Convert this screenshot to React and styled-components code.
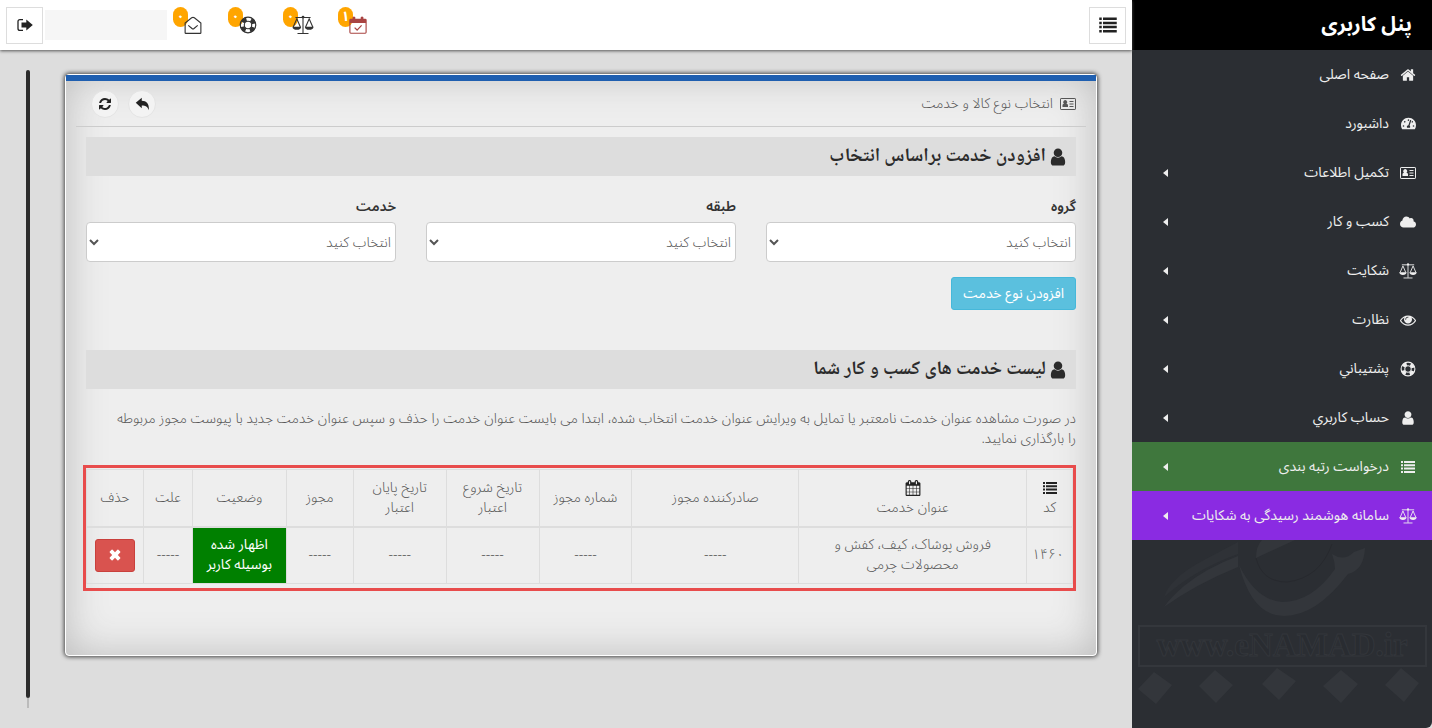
import styled, { createGlobalStyle } from "styled-components"
import { FaCloud, FaTachometerAlt } from "react-icons/fa"

const menu = [
  { label: "صفحه اصلی", icon: "home" },
  { label: "داشبورد", icon: "dashboard" },
  { label: "تکمیل اطلاعات", icon: "card", sub: true },
  { label: "کسب و کار", icon: "cloud", sub: true },
  { label: "شکایت", icon: "scale", sub: true },
  { label: "نظارت", icon: "eye", sub: true },
  { label: "پشتيباني", icon: "ring", sub: true },
  { label: "حساب کاربري", icon: "user", sub: true },
  { label: "درخواست رتبه بندی", icon: "list", sub: true, color: "#3f773d" },
  { label: "سامانه هوشمند رسیدگی به شکایات", icon: "scale", sub: true, color: "#8a2be2" },
]

const notices = [
  { icon: "calendarCheck", count: "۱", label: "تقویم", color: "#a94442" },
  { icon: "scale", count: "۰", label: "شکایت" },
  { icon: "ring", count: "۰", label: "پشتیبانی" },
  { icon: "envelope", count: "۰", label: "پیام" },
]

const fields = [
  { id: "group", label: "گروه" },
  { id: "category", label: "طبقه" },
  { id: "service", label: "خدمت" },
]

const columns = [
  { label: "کد", icon: "list", width: 46 },
  { label: "عنوان خدمت", icon: "calendar", width: 228 },
  { label: "صادرکننده مجوز", width: 167 },
  { label: "شماره مجوز", width: 93 },
  { label: "تاریخ شروع اعتبار", width: 93 },
  { label: "تاریخ پایان اعتبار", width: 93 },
  { label: "مجوز", width: 67 },
  { label: "وضعیت", width: 94 },
  { label: "علت", width: 49 },
  { label: "حذف", width: 57 },
]

const paths = {
  home: "M1472 992v480q0 26-19 45t-45 19h-384v-384h-256v384h-384q-26 0-45-19t-19-45v-480q0-1 .5-3t.5-3l575-474 575 474q1 2 1 6zm223-69l-62 74q-8 9-21 11h-3q-13 0-21-7l-692-577-692 577q-12 8-24 7-13-2-21-11l-62-74q-8-10-7-23.5t11-21.5l719-599q32-26 76-26t76 26l244 204v-195q0-14 9-23t23-9h192q14 0 23 9t9 23v408l219 182q10 8 11 21.5t-7 23.5z",
  user: "M1536 1399q0 109-62.5 187t-150.5 78h-854q-88 0-150.5-78t-62.5-187q0-85 8.5-160.5t31.5-152 58.5-131 94-89 134.5-34.5q131 128 313 128t313-128q76 0 134.5 34.5t94 89 58.5 131 31.5 152 8.5 160.5zm-256-887q0 159-112.5 271.5t-271.5 112.5-271.5-112.5-112.5-271.5 112.5-271.5 271.5-112.5 271.5 112.5 112.5 271.5z",
  eye: "M1664 960q-152-236-381-353 61 104 61 225 0 185-131.5 316.5t-316.5 131.5-316.5-131.5-131.5-316.5q0-121 61-225-229 117-381 353 133 205 333.5 326.5t434.5 121.5 434.5-121.5 333.5-326.5zm-720-384q0-20-14-34t-34-14q-125 0-214.5 89.5t-89.5 214.5q0 20 14 34t34 14 34-14 14-34q0-86 61-147t147-61q20 0 34-14t14-34zm848 384q0 34-20 69-140 230-376.5 368.5t-499.5 138.5-499.5-139-376.5-368q-20-35-20-69t20-69q140-229 376.5-368t499.5-139 499.5 139 376.5 368q20 35 20 69z",
  refresh: "M1639 1056q0 5-1 7-64 268-268 434.5t-478 166.5q-146 0-282.5-55t-243.5-157l-129 129q-19 19-45 19t-45-19-19-45v-448q0-26 19-45t45-19h448q26 0 45 19t19 45-19 45l-137 137q71 66 161 102t187 36q134 0 250-65t186-179q11-17 53-117 8-23 30-23h192q13 0 22.5 9.5t9.5 22.5zm25-800v448q0 26-19 45t-45 19h-448q-26 0-45-19t-19-45 19-45l138-138q-148-137-349-137-134 0-250 65t-186 179q-11 17-53 117-8 23-30 23h-199q-13 0-22.5-9.5t-9.5-22.5v-7q65-268 270-434.5t480-166.5q146 0 284 55.5t245 156.5l130-129q19-19 45-19t45 19 19 45z",
  calendar: "M192 1664h288v-288h-288v288zm352 0h320v-288h-320v288zm-352-352h288v-320h-288v320zm352 0h320v-320h-320v320zm-352-384h288v-288h-288v288zm736 736h320v-288h-320v288zm-384-736h320v-288h-320v288zm768 736h288v-288h-288v288zm-384-352h320v-320h-320v320zm-352-864v-288q0-13-9.5-22.5t-22.5-9.5h-64q-13 0-22.5 9.5t-9.5 22.5v288q0 13 9.5 22.5t22.5 9.5h64q13 0 22.5-9.5t9.5-22.5zm736 864h288v-320h-288v320zm-384-384h320v-288h-320v288zm384 0h288v-288h-288v288zm32-480v-288q0-13-9.5-22.5t-22.5-9.5h-64q-13 0-22.5 9.5t-9.5 22.5v288q0 13 9.5 22.5t22.5 9.5h64q13 0 22.5-9.5t9.5-22.5zm384-64v1280q0 52-38 90t-90 38h-1408q-52 0-90-38t-38-90v-1280q0-52 38-90t90-38h128v-96q0-66 47-113t113-47h64q66 0 113 47t47 113v96h384v-96q0-66 47-113t113-47h64q66 0 113 47t47 113v96h128q52 0 90 38t38 90z",
}

const Icon = ({ name, size = 16 }) => {
  if (name === "cloud") return <FaCloud size={size} aria-hidden="true" />
  if (name === "dashboard") return <FaTachometerAlt size={size - 1} aria-hidden="true" />
  if (paths[name]) {
    return (
      <svg width={size} height={size} viewBox="0 0 1792 1792" fill="currentColor" aria-hidden="true">
        <path d={paths[name]} />
      </svg>
    )
  }
  return (
    <svg width={size} height={size} viewBox="0 0 16 16" fill="none" stroke="currentColor" aria-hidden="true">
      {name === "list" && (
        <path
          d="M1 2h2v2H1zM4 2h11v2H4zM1 5.3h2v2H1zM4 5.3h11v2H4zM1 8.6h2v2H1zM4 8.6h11v2H4zM1 12h2v2H1zM4 12h11v2H4z"
          fill="currentColor"
          stroke="none"
        />
      )}
      {name === "card" && (
        <>
          <rect x=".5" y="2.5" width="15" height="11" rx=".6" />
          <path d="M9.5 5.5h4M9.5 8h4M9.5 10.5h4" />
          <path d="M2.5 11V9.2q0-1.4 1.4-1.5a2 2 0 1 1 2.6 0q1.5.1 1.5 1.5V11z" fill="currentColor" stroke="none" />
        </>
      )}
      {name === "scale" && (
        <>
          <path d="M2.5 2.5h11M8 2v12M4 14.2h8M.9 9.5l2.6-6 2.6 6M9.9 9.5l2.6-6 2.6 6" strokeWidth=".8" />
          <circle cx="8" cy="2.2" r="1" fill="currentColor" stroke="none" />
          <path d="M.3 9.2h6.4q-.3 2.3-3.2 2.3T.3 9.2zM9.3 9.2h6.4q-.3 2.3-3.2 2.3T9.3 9.2z" fill="currentColor" stroke="none" />
        </>
      )}
      {name === "ring" && (
        <>
          <circle cx="8" cy="8" r="6.9" strokeWidth="1.1" />
          <circle cx="8" cy="8" r="3.3" strokeWidth="1" />
          <circle cx="8" cy="8" r="5.2" strokeWidth="3.6" strokeDasharray="4.1 4.07" strokeDashoffset="-2.04" />
        </>
      )}
      {name === "envelope" && (
        <>
          <path d="M1 14.8V6.2L6.8 1.6q1.2-.8 2.4 0L15 6.2v8.6q0 .6-.6.6H1.6q-.6 0-.6-.6z" />
          <path d="M3.8 8.3l3.3 2.8q.9.7 1.8 0l3.3-2.8" />
        </>
      )}
      {name === "calendarCheck" && (
        <>
          <rect x=".8" y="3" width="14.4" height="12.3" rx=".8" />
          <path d="M.8 3h14.4v3.2H.8zM3.2 1.2q1.2-1.4 2.4 0v3H3.2zM10.4 1.2q1.2-1.4 2.4 0v3h-2.4z" fill="currentColor" stroke="none" />
          <path d="M5 10.3l2.2 2.2 4-4.2" strokeWidth="1.1" />
        </>
      )}
      {name === "reply" && (
        <path
          d="M.8 6L7.2.9v3.2c5 .1 8 3 7.6 9.9-1.5-3.9-3.6-5-7.6-5v3.1z"
          fill="currentColor"
          stroke="none"
        />
      )}
      {name === "logout" && (
        <>
          <path d="M6 2.6H3q-2 0-2 2v6.8q0 2 2 2h3" strokeWidth="1.3" />
          <path d="M4.5 5.5h4.8V2.4L15.8 8l-6.5 5.6v-3.1H4.5z" fill="currentColor" stroke="none" />
        </>
      )}
      {name === "remove" && (
        <path
          d="M2.8 4.6l1.8-1.8q.5-.4 1 0L8 5.2l2.4-2.4q.5-.4 1 0l1.8 1.8q.4.5 0 1L10.8 8l2.4 2.4q.4.5 0 1l-1.8 1.8q-.5.4-1 0L8 10.8l-2.4 2.4q-.5.4-1 0l-1.8-1.8q-.4-.5 0-1L5.2 8 2.8 5.6q-.4-.5 0-1z"
          fill="currentColor"
          stroke="none"
        />
      )}
    </svg>
  )
}

const Watermark = () => (
  <svg width="100%" viewBox="0 0 300 187" aria-hidden="true">
    <g fill="#33363b">
      <path d="M32 67Q38 58 52 46Q74 28 106 16l0 11Q64 44 32 67zM124 18L163 0H130Q124 6 124 18z" />
      <path d="M32 57Q38 38 72 20L106 2v12Q62 30 32 57z" fill="#2f3237" />
      <path d="M107 25Q120 76 152 76Q184 76 216 34Q232 30 233 8L222 12Q212 22 200 14Q203 22 203 29Q180 62 150 62Q124 60 107 25z" />
      <path d="M124 18Q130 42 155 42Q188 38 200 4" fill="none" stroke="#27292e" />
      <path d="M22 132l18 13-16 19-18-15zM83 130l18 15-17 18-17-17zM145 128l19 13-17 19-17-16zM209 130l17 14-17 19-18-17zM269 128l18 15-15 19-19-17z" />
    </g>
    <rect x="7" y="86" width="287" height="40" fill="none" stroke="#34373c" strokeWidth="2" />
    <text x="150" y="116" textAnchor="middle" direction="ltr" fill="#292c31" stroke="#33363b" strokeWidth="1">
      www.eNAMAD.ir
    </text>
  </svg>
)

const App = () => {
  return (
    <>
      <GlobalStyle />
      <Wrapper dir="rtl" lang="fa">
        <Sidebar>
          <Brand>پنل کاربری</Brand>
          <nav>
            {menu.map(item => (
              <MenuItem key={item.label} href="#" $color={item.color}>
                <MenuIcon><Icon name={item.icon} size={item.icon === "scale" ? 18 : 16} /></MenuIcon>
                <span>{item.label}</span>
                {item.sub && <Caret />}
              </MenuItem>
            ))}
          </nav>
          <Watermark />
        </Sidebar>
        <Main>
          <Topbar>
            <SquareButton aria-label="منو"><Icon name="list" size={20} /></SquareButton>
            <Notices>
              {notices.map(item => (
                <Notice key={item.icon} href="#" aria-label={item.label} $color={item.color}>
                  <Badge>{item.count}</Badge>
                  <Icon name={item.icon} size={item.icon === "scale" ? 22 : 18} />
                </Notice>
              ))}
            </Notices>
            <UserName />
            <SquareButton aria-label="خروج"><Icon name="logout" /></SquareButton>
          </Topbar>
          <Content>
            <Panel>
              <PanelHeader>
                <PanelTitle>
                  <Icon name="card" />
                  انتخاب نوع کالا و خدمت
                </PanelTitle>
                <Tools>
                  <RoundButton aria-label="بازگشت"><Icon name="reply" size={15} /></RoundButton>
                  <RoundButton aria-label="بارگذاری مجدد"><Icon name="refresh" size={14} /></RoundButton>
                </Tools>
              </PanelHeader>
              <PanelBody>
                <SectionTitle>
                  <Icon name="user" size={20} />
                  افزودن خدمت براساس انتخاب
                </SectionTitle>
                <Fields>
                  {fields.map(field => (
                    <Field key={field.id}>
                      <label htmlFor={field.id}>{field.label}</label>
                      <select id={field.id}>
                        <option>انتخاب کنید</option>
                      </select>
                    </Field>
                  ))}
                </Fields>
                <AddButton>افزودن نوع خدمت</AddButton>
                <SectionTitle>
                  <Icon name="user" size={20} />
                  لیست خدمت های کسب و کار شما
                </SectionTitle>
                <Note>
                  در صورت مشاهده عنوان خدمت نامعتبر یا تمایل به ویرایش عنوان خدمت انتخاب شده، ابتدا می بایست عنوان خدمت را حذف و سپس عنوان خدمت جدید با پیوست مجوز مربوطه را بارگذاری نمایید.
                </Note>
                <TableFrame>
                  <Table>
                    <colgroup>
                      {columns.map(col => <col key={col.label} style={{ width: `${col.width / 9.87}%` }} />)}
                    </colgroup>
                    <thead>
                      <tr>
                        {columns.map(col => (
                          <th key={col.label}>
                            {col.icon && <HeadIcon><Icon name={col.icon} /></HeadIcon>}
                            {col.label}
                          </th>
                        ))}
                      </tr>
                    </thead>
                    <tbody>
                      <tr>
                        <td>۱۴۶۰</td>
                        <td>فروش پوشاک، کیف، کفش و محصولات چرمی</td>
                        <td>-----</td>
                        <td>-----</td>
                        <td>-----</td>
                        <td>-----</td>
                        <td>-----</td>
                        <StatusCell>اظهار شده بوسیله کاربر</StatusCell>
                        <td>-----</td>
                        <td>
                          <DeleteButton aria-label="حذف"><Icon name="remove" /></DeleteButton>
                        </td>
                      </tr>
                    </tbody>
                  </Table>
                </TableFrame>
              </PanelBody>
            </Panel>
            <Rail />
          </Content>
        </Main>
      </Wrapper>
    </>
  )
}

export default App

const GlobalStyle = createGlobalStyle`
  *{
    box-sizing: border-box;
  }
  body{
    margin: 0;
    background: #ddd;
    color: #555;
    font: 14px/20px "Noto Sans Arabic", "DejaVu Sans Condensed", "DejaVu Sans", sans-serif;
  }
  button, select{
    font: inherit;
  }
  button{
    cursor: pointer;
  }
  svg{
    display: block;
    flex-shrink: 0;
  }
`
const Wrapper = styled.div`
  display: flex;
  min-height: 100vh;
`
const Sidebar = styled.aside`
  width: 300px;
  flex-shrink: 0;
  background: #2b2e33;
  color: #eee;
  border-bottom-right-radius: 6px;
  text{
    font: bold 33px "Liberation Serif", serif;
  }
`
const Brand = styled.div`
  height: 50px;
  padding: 0 20px;
  background: #000;
  color: #fff;
  font-size: 20px;
  font-weight: 700;
  line-height: 50px;
`
const MenuItem = styled.a`
  display: flex;
  align-items: center;
  height: 49px;
  padding: 0 15px;
  gap: 10px;
  color: #eee;
  text-decoration: none;
  white-space: nowrap;
  background: ${({ $color }) => $color || "transparent"};
`
const MenuIcon = styled.span`
  display: flex;
  justify-content: center;
  width: 18px;
`
const Caret = styled.i`
  margin-right: auto;
  margin-left: 16px;
  border: 4px solid transparent;
  border-left: 0;
  border-right: 5px solid #eee;
`
const Main = styled.main`
  flex: 1;
  min-width: 0;
  display: flex;
  flex-direction: column;
  font-weight: 300;
`
const Topbar = styled.header`
  display: flex;
  align-items: center;
  height: 50px;
  padding: 0 6px;
  background: #fff;
  box-shadow: 0 1px 3px #555;
`
const SquareButton = styled.button`
  display: grid;
  place-items: center;
  width: 37px;
  height: 37px;
  padding: 0;
  background: #fff;
  border: 1px solid #ddd;
  color: #222;
`
const Notices = styled.div`
  display: flex;
  gap: 28px;
  margin: 0 auto 0 12px;
`
const Notice = styled.a`
  position: relative;
  display: flex;
  align-items: center;
  justify-content: center;
  width: 27px;
  height: 36px;
  color: ${({ $color }) => $color || "#333"};
  svg{
    position: relative;
  }
`
const Badge = styled.span`
  position: absolute;
  top: 0;
  left: -6px;
  width: 15px;
  height: 20px;
  border-radius: 8px;
  background: #ffa500;
  color: #fff;
  font-size: 14px;
  font-weight: 700;
  text-align: center;
`
const UserName = styled.div`
  width: 122px;
  height: 30px;
  margin-left: 2px;
  background: #f6f6f6;
`
const Content = styled.div`
  flex: 1;
  display: flex;
  gap: 35px;
  padding: 20px 35px 20px 26px;
`
const Panel = styled.section`
  flex: 1;
  min-width: 0;
  align-self: flex-start;
  margin-top: 4px;
  padding-bottom: 64px;
  background: #eee;
  border: 1px solid #fff;
  border-radius: 4px;
  box-shadow: 0 0 4px 1px #444, inset 0 0 40px #bbb;
`
const PanelHeader = styled.div`
  display: flex;
  align-items: center;
  justify-content: space-between;
  height: 52px;
  padding: 0 20px;
  border-top: 6px solid #1f5fb0;
  position: relative;
  &::after{
    content: "";
    position: absolute;
    bottom: 0;
    left: 10px;
    right: 10px;
    border-bottom: 1px solid #ccc;
  }
`
const PanelTitle = styled.h1`
  display: flex;
  align-items: center;
  gap: 7px;
  margin: 0;
  font-size: 14px;
  font-weight: 300;
`
const Tools = styled.div`
  display: flex;
  gap: 9px;
  padding-left: 5px;
`
const RoundButton = styled.button`
  display: grid;
  place-items: center;
  width: 28px;
  height: 28px;
  padding: 0;
  background: #f3f3f3;
  border: 1px solid #e4e4e4;
  border-radius: 50%;
  color: #222;
`
const PanelBody = styled.div`
  padding: 10px 20px 0;
`
const SectionTitle = styled.h2`
  display: flex;
  align-items: center;
  gap: 2px;
  height: 39px;
  margin: 0;
  padding: 0 8px;
  background: #ddd;
  color: #2b2b2b;
  font-family: "Noto Naskh Arabic", "Noto Sans Arabic", "DejaVu Sans Condensed", sans-serif;
  font-size: 19px;
  font-weight: 900;
`
const Fields = styled.div`
  display: grid;
  grid-template-columns: repeat(3, 1fr);
  gap: 30px;
  margin-top: 21px;
`
const Field = styled.div`
  display: flex;
  flex-direction: column;
  gap: 5px;
  label{
    color: #333;
    font-weight: 600;
  }
  select{
    height: 40px;
    padding: 0;
    background: #fff;
    border: 1px solid #ccc;
    border-radius: 4px;
    color: #555;
  }
`
const AddButton = styled.button`
  display: block;
  height: 33px;
  margin: 15px 0 40px;
  padding: 0 11px;
  background: #5bc0de;
  border: 1px solid #46b8da;
  border-radius: 3px;
  color: #fff;
  font-weight: 400;
`
const Note = styled.p`
  margin: 20px 0 16px;
  padding-left: 24px;
`
const TableFrame = styled.div`
  margin: 0 0 0 -3px;
  padding: 1px 0 4px;
  border: 3px solid #e84c4c;
`
const Table = styled.table`
  width: 100%;
  table-layout: fixed;
  border-collapse: collapse;
  text-align: center;
  th, td{
    height: 57px;
    padding: 0 8px;
    border: 1px solid #ddd;
    font-weight: 300;
  }
  th{
    border-bottom-width: 2px;
  }
`
const HeadIcon = styled.span`
  display: flex;
  align-items: center;
  justify-content: center;
  height: 20px;
  color: #222;
`
const StatusCell = styled.td`
  && {
    background: #008000;
    color: #fff;
    font-weight: 400;
  }
`
const DeleteButton = styled.button`
  display: inline-grid;
  place-items: center;
  width: 40px;
  height: 33px;
  padding: 0;
  background: #d9534f;
  border: 1px solid #c9403c;
  border-radius: 3px;
  color: #fff;
  vertical-align: middle;
`
const Rail = styled.div`
  display: flex;
  flex-direction: column;
  align-items: center;
  width: 4px;
  &::before{
    content: "";
    flex: 1;
    width: 4px;
    border-radius: 2px;
    background: #2b2b2b;
  }
  &::after{
    content: "";
    width: 2px;
    height: 10px;
    background: #bbb;
  }
`
